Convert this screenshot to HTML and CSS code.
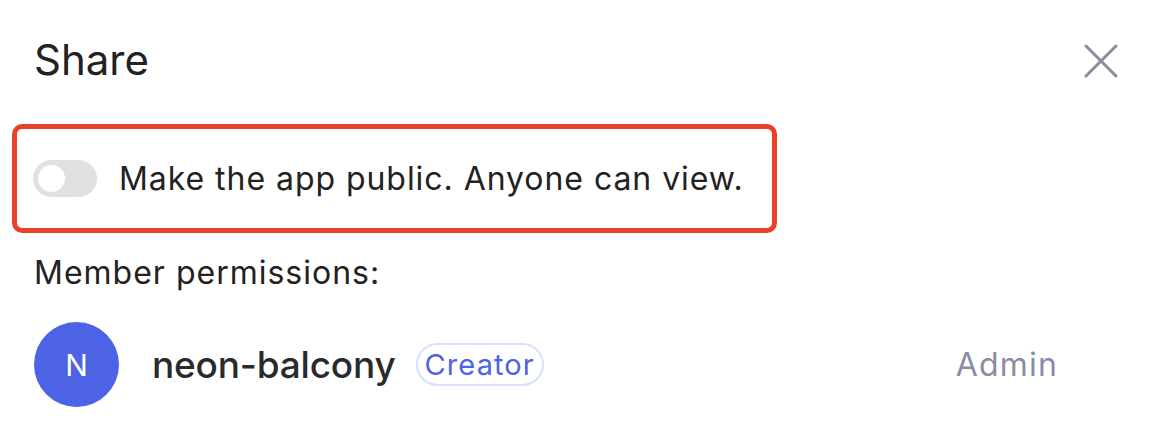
FILE: index.html
```html
<!DOCTYPE html>
<html lang="en">
<head>
<meta charset="utf-8">
<title>Share</title>
<link rel="stylesheet" href="styles.css">
</head>
<body>
<div class="dialog">
  <div class="header">
    <h1 class="title">Share</h1>
    <button class="close" aria-label="Close">
      <svg width="34" height="34" viewBox="0 0 34 34"><path d="M2 2 L32 32 M32 2 L2 32" stroke="#8a8c9e" stroke-width="3" stroke-linecap="round" fill="none"/></svg>
    </button>
  </div>
  <div class="public-box">
    <span class="toggle"><span class="knob"></span></span>
    <span class="public-text">Make the app public. Anyone can view.</span>
  </div>
  <div class="section-label">Member permissions:</div>
  <div class="member">
    <div class="avatar">N</div>
    <div class="name">neon-balcony</div>
    <div class="badge">Creator</div>
    <div class="role">Admin</div>
  </div>
</div>
</body>
</html>
```
FILE: styles.css
```css
* { box-sizing: border-box; }
html, body { margin: 0; background: #fff; }
body { font-family: Inter, "Noto Sans", sans-serif; color: #222; }
.dialog { padding: 24px 38px 0 12px; }
.header { display: flex; justify-content: space-between; align-items: center; padding-left: 22px; height: 70px; }
.title { margin: 0; font-size: 42px; font-weight: 400; letter-spacing: 0; }
.close { border: 0; background: none; padding: 0; width: 34px; height: 34px; display: flex; margin-top: 4px; }
.public-box { display: inline-flex; align-items: center; gap: 22px; margin-top: 30px; width: 765px; height: 109px; border: 5px solid #e8412a; border-radius: 10px; padding-left: 16px; }
.toggle { width: 64px; height: 37px; border-radius: 19px; background: #e0e0e0; display: flex; align-items: center; padding-left: 5px; }
.knob { width: 27px; height: 27px; border-radius: 50%; background: #fff; }
.public-text { font-size: 32px; letter-spacing: 0.95px; }
.section-label { font-size: 32px; letter-spacing: 1px; padding-left: 22px; margin-top: 20px; }
.member { display: flex; align-items: center; padding-left: 22px; margin-top: 30px; }
.avatar { width: 85px; height: 85px; border-radius: 50%; background: #4b63e4; color: #fff; display: flex; align-items: center; justify-content: center; font-size: 30px; }
.name { font-size: 37px; font-weight: 500; margin-left: 33px; color: #2a2a2a; letter-spacing: -0.2px; }
.badge { margin-left: 20px; border: 2px solid #d7e0fc; border-radius: 22px; height: 43px; padding: 0 7px; display: flex; align-items: center; font-size: 29px; letter-spacing: 1.1px; color: #4d63e8; }
.role { margin-left: auto; margin-right: 60px; font-size: 32px; letter-spacing: 1.2px; color: #8a8ca6; }
```
